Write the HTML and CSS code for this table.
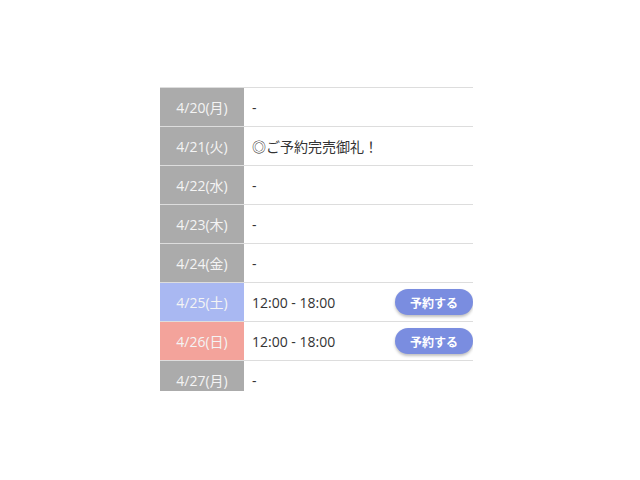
FILE: index.html
```html
<!DOCTYPE html>
<html lang="ja">
<head>
    <meta charset="utf-8">
    <title>予約カレンダー</title>
    <link rel="stylesheet" href="styles.css">
</head>
<body>
    <div class="page">
        <div class="schedule">
            <div class="row">
                <div class="date">4/20(月)</div>
                <div class="info">-</div>
            </div>
            <div class="row">
                <div class="date">4/21(火)</div>
                <div class="info">◎ご予約完売御礼！</div>
            </div>
            <div class="row">
                <div class="date">4/22(水)</div>
                <div class="info">-</div>
            </div>
            <div class="row">
                <div class="date">4/23(木)</div>
                <div class="info">-</div>
            </div>
            <div class="row">
                <div class="date">4/24(金)</div>
                <div class="info">-</div>
            </div>
            <div class="row">
                <div class="date sat">4/25(土)</div>
                <div class="info">
                    <span>12:00 - 18:00</span>
                    <button class="reserve">予約する</button>
                </div>
            </div>
            <div class="row">
                <div class="date sun">4/26(日)</div>
                <div class="info">
                    <span>12:00 - 18:00</span>
                    <button class="reserve">予約する</button>
                </div>
            </div>
            <div class="row">
                <div class="date">4/27(月)</div>
                <div class="info">-</div>
            </div>
        </div>
    </div>
</body>
</html>
```

FILE: styles.css
```css
body {
    margin: 0;
    padding: 0;
    background-color: #fff;
    font-family: "Open Sans", "Noto Sans CJK JP", sans-serif;
    color: #333;
}

.page {
    padding: 87px 0 0 160px;
}

.schedule {
    width: 313px;
    height: 303px;
    overflow: hidden;
    border-top: 1px solid #ddd;
}

.row {
    display: flex;
    height: 38px;
    border-bottom: 1px solid #ddd;
}

.date {
    width: 84px;
    flex-shrink: 0;
    display: flex;
    align-items: center;
    justify-content: center;
    background-color: #ababab;
    color: #f4f4f4;
    font-size: 14px;
}

.date.sat {
    background-color: #a9b8f2;
}

.date.sun {
    background-color: #f3a39b;
}

.info {
    flex: 1;
    display: flex;
    align-items: center;
    justify-content: space-between;
    padding-left: 8px;
    font-size: 14px;
}

.reserve {
    height: 26px;
    width: 78px;
    border: none;
    border-radius: 13px;
    background-color: #7a8de0;
    color: #fff;
    font-family: "Noto Sans CJK JP", sans-serif;
    font-size: 12px;
    font-weight: bold;
    box-shadow: 0 2px 3px rgba(0, 0, 0, 0.25);
    cursor: pointer;
}
```
